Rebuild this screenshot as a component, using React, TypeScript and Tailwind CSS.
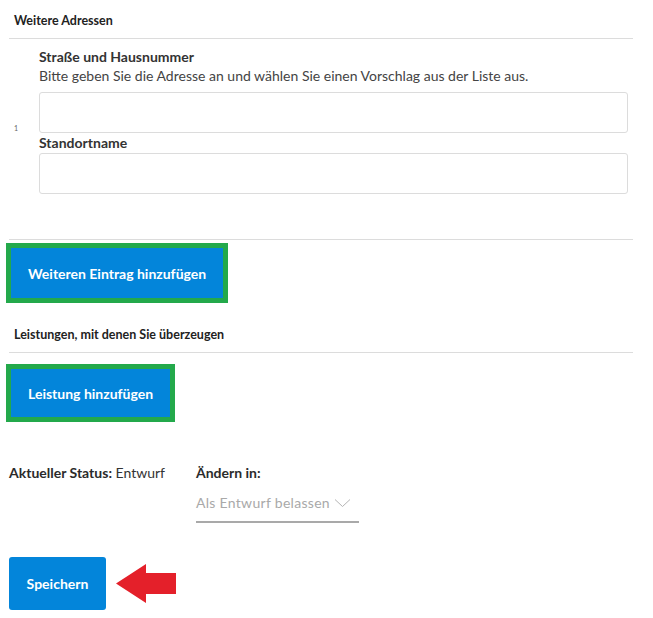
import React from 'react';

const font = { fontFamily: 'Lato, "Liberation Sans", sans-serif' };

const GreenButton: React.FC<{ label: string; h: string }> = ({ label, h }) => (
  <div className="flex w-fit border-[5px] border-[#23a94b]">
    <button type="button" className={`bg-[#0385da] text-white font-bold text-[14px] px-[17px] ${h}`}>
      {label}
    </button>
  </div>
);

export default function App() {
  return (
    <div className="w-[653px] h-[618px] bg-white text-[#2b2b2b] overflow-hidden" style={font}>
      {/* Weitere Adressen */}
      <div className="pt-[14px] pl-[14px] text-[12.5px] leading-[14px] font-bold text-[#222]">Weitere Adressen</div>
      <div className="mt-[10px] ml-[9px] w-[624px] h-px bg-[#dcdcdc]" />

      <div className="relative pl-[39px] pr-[25px] pt-[9px]">
        <span className="absolute left-[14px] top-[84px] text-[7px] text-[#666]">1</span>
        <label className="block text-[14px] font-bold text-[#333] leading-[18px]">Straße und Hausnummer</label>
        <p className="text-[14px] text-[#444] leading-[18px] mt-[1px]">
          Bitte geben Sie die Adresse an und wählen Sie einen Vorschlag aus der Liste aus.
        </p>
        <input className="mt-[7px] block w-full h-[41px] border border-[#dcdcdc] rounded-[3px]" />
        <label className="block mt-[1px] text-[14px] font-bold text-[#333] leading-[18px]">Standortname</label>
        <input className="mt-[1px] block w-full h-[41px] border border-[#dcdcdc] rounded-[3px]" />
      </div>

      <div className="mt-[45px] ml-[9px] w-[624px] h-px bg-[#dcdcdc]" />
      <div className="mt-[3px] ml-[6px]">
        <GreenButton label="Weiteren Eintrag hinzufügen" h="h-[50px]" />
      </div>

      {/* Leistungen */}
      <div className="mt-[25px] pl-[14px] text-[12.5px] leading-[14px] font-bold text-[#222]">Leistungen, mit denen Sie überzeugen</div>
      <div className="mt-[10px] ml-[9px] w-[624px] h-px bg-[#dcdcdc]" />
      <div className="mt-[11px] ml-[6px]">
        <GreenButton label="Leistung hinzufügen" h="h-[48px]" />
      </div>

      {/* Status */}
      <div className="mt-[42px] pl-[9px] flex">
        <div className="w-[187px] text-[14px] leading-[18px]">
          <span className="font-bold text-[#2b2b2b]">Aktueller Status:</span>{' '}
          <span className="text-[#333]">Entwurf</span>
        </div>
        <div>
          <div className="text-[14px] leading-[18px] font-bold text-[#2b2b2b]">Ändern in:</div>
          <div className="mt-[12px] w-[163px] border-b-2 border-[#a9a9a9] pb-[9px] flex items-center text-[14px] leading-[18px] text-[#a9a9a9] tracking-[0.3px]">
            <span>Als Entwurf belassen</span>
            <svg className="ml-[4px]" width="17" height="10" viewBox="0 0 17 10" fill="none">
              <path d="M1 1.5 L8.5 8.5 L16 1.5" stroke="#b5b5b5" strokeWidth="1" />
            </svg>
          </div>
        </div>
      </div>

      {/* Speichern */}
      <div className="mt-[34px] pl-[9px] flex items-center">
        <button type="button" className="w-[97px] h-[53px] rounded-[3px] bg-[#0385da] text-white font-bold text-[14px]">
          Speichern
        </button>
        <svg className="ml-[10px]" width="61" height="39" viewBox="0 0 61 39">
          <path d="M0 19.5 L30 0 L30 9 L60 9 L60 30 L30 30 L30 39 Z" fill="#e4202a" />
        </svg>
      </div>
    </div>
  );
}
